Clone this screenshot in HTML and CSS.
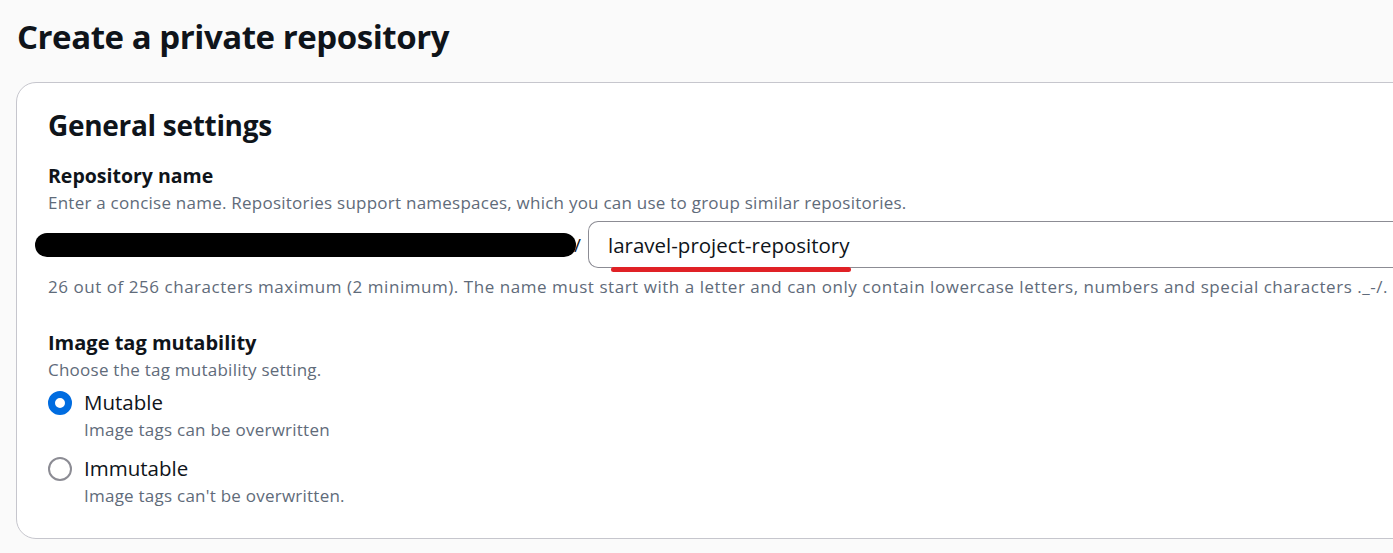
FILE: index.html
```html
<!DOCTYPE html>
<html>
<head>
<meta charset="utf-8">
<link rel="stylesheet" href="styles.css">
</head>
<body>
<main class="page">
  <h1 class="title">Create a private repository</h1>
  <section class="card">
    <h2 class="card-title">General settings</h2>
    <div class="field">
      <div class="label">Repository name</div>
      <div class="desc">Enter a concise name. Repositories support namespaces, which you can use to group similar repositories.</div>
      <div class="name-row">
        <div class="prefix"><span class="redact"></span><span class="slash">/</span></div>
        <div class="input">
          <span class="input-text">laravel-project-repository</span>
          <span class="mark"></span>
        </div>
      </div>
      <div class="desc hint">26 out of 256 characters maximum (2 minimum). The name must start with a letter and can only contain lowercase letters, numbers and special characters ._-/.</div>
    </div>
    <div class="field second">
      <div class="label">Image tag mutability</div>
      <div class="desc">Choose the tag mutability setting.</div>
      <div class="radios">
        <div class="radio">
          <span class="dot checked"></span>
          <div class="radio-body">
            <div class="radio-label">Mutable</div>
            <div class="desc">Image tags can be overwritten</div>
          </div>
        </div>
        <div class="radio">
          <span class="dot"></span>
          <div class="radio-body">
            <div class="radio-label">Immutable</div>
            <div class="desc">Image tags can't be overwritten.</div>
          </div>
        </div>
      </div>
    </div>
  </section>
</main>
</body>
</html>
```
FILE: styles.css
```css
html, body {
  margin: 0;
  padding: 0;
  background: #fafafa;
  overflow: hidden;
  font-family: "Open Sans", "Noto Sans", sans-serif;
  color: #0f141a;
}
.page {
  padding: 15px 0 0 16px;
  width: 1440px;
}
.title {
  margin: 0 0 0 1px;
  font-size: 33px;
  font-weight: 700;
  line-height: 44px;
  letter-spacing: -0.45px;
}
.card {
  margin-top: 23px;
  background: #fff;
  border: 1px solid #c6c6cd;
  border-radius: 20px;
  padding: 22px 0 29px 31px;
}
.card-title {
  margin: 0;
  font-size: 28px;
  font-weight: 700;
  line-height: 40px;
  letter-spacing: -0.3px;
}
.field { margin-top: 17px; }
.field.second { margin-top: 29px; }
.label {
  font-size: 19.5px;
  font-weight: 700;
  line-height: 27px;
}
.second .label { font-size: 20px; }
.desc {
  font-size: 17px;
  line-height: 27px;
  color: #5f6b7a;
  letter-spacing: 0.24px;
}
.hint {
  margin-top: 5px;
  letter-spacing: 0.54px;
}
.name-row {
  display: flex;
  align-items: center;
  margin-top: 5px;
  margin-left: -13px;
}
.prefix {
  display: flex;
  align-items: center;
  width: 553px;
}
.redact {
  display: block;
  width: 541px;
  height: 24px;
  background: #000;
  border-radius: 12px;
}
.slash {
  font-size: 19px;
  margin-left: -2px;
  color: #0f141a;
}
.input {
  position: relative;
  flex: 1;
  height: 47px;
  border: 1px solid #8c8c94;
  border-right: none;
  border-radius: 10px 0 0 10px;
  display: flex;
  align-items: center;
  padding-left: 19px;
  box-sizing: border-box;
}
.input-text {
  font-size: 20.5px;
  color: #0f141a;
}
.mark {
  position: absolute;
  left: 22px;
  top: 45px;
  width: 240px;
  height: 5px;
  border-radius: 3px;
  background: #e02126;
}
.radios { margin-top: 6px; }
.radio {
  display: flex;
  align-items: flex-start;
}
.radio + .radio { margin-top: 12px; }
.dot {
  width: 24px;
  height: 24px;
  border-radius: 50%;
  border: 2px solid #8c8c94;
  box-sizing: border-box;
  margin-top: 1.5px;
  flex: none;
}
.dot.checked {
  border: 7px solid #006ce0;
  background: #fff;
}
.radio-body { margin-left: 12px; }
.radio-label {
  font-size: 20.5px;
  line-height: 27px;
}
```
